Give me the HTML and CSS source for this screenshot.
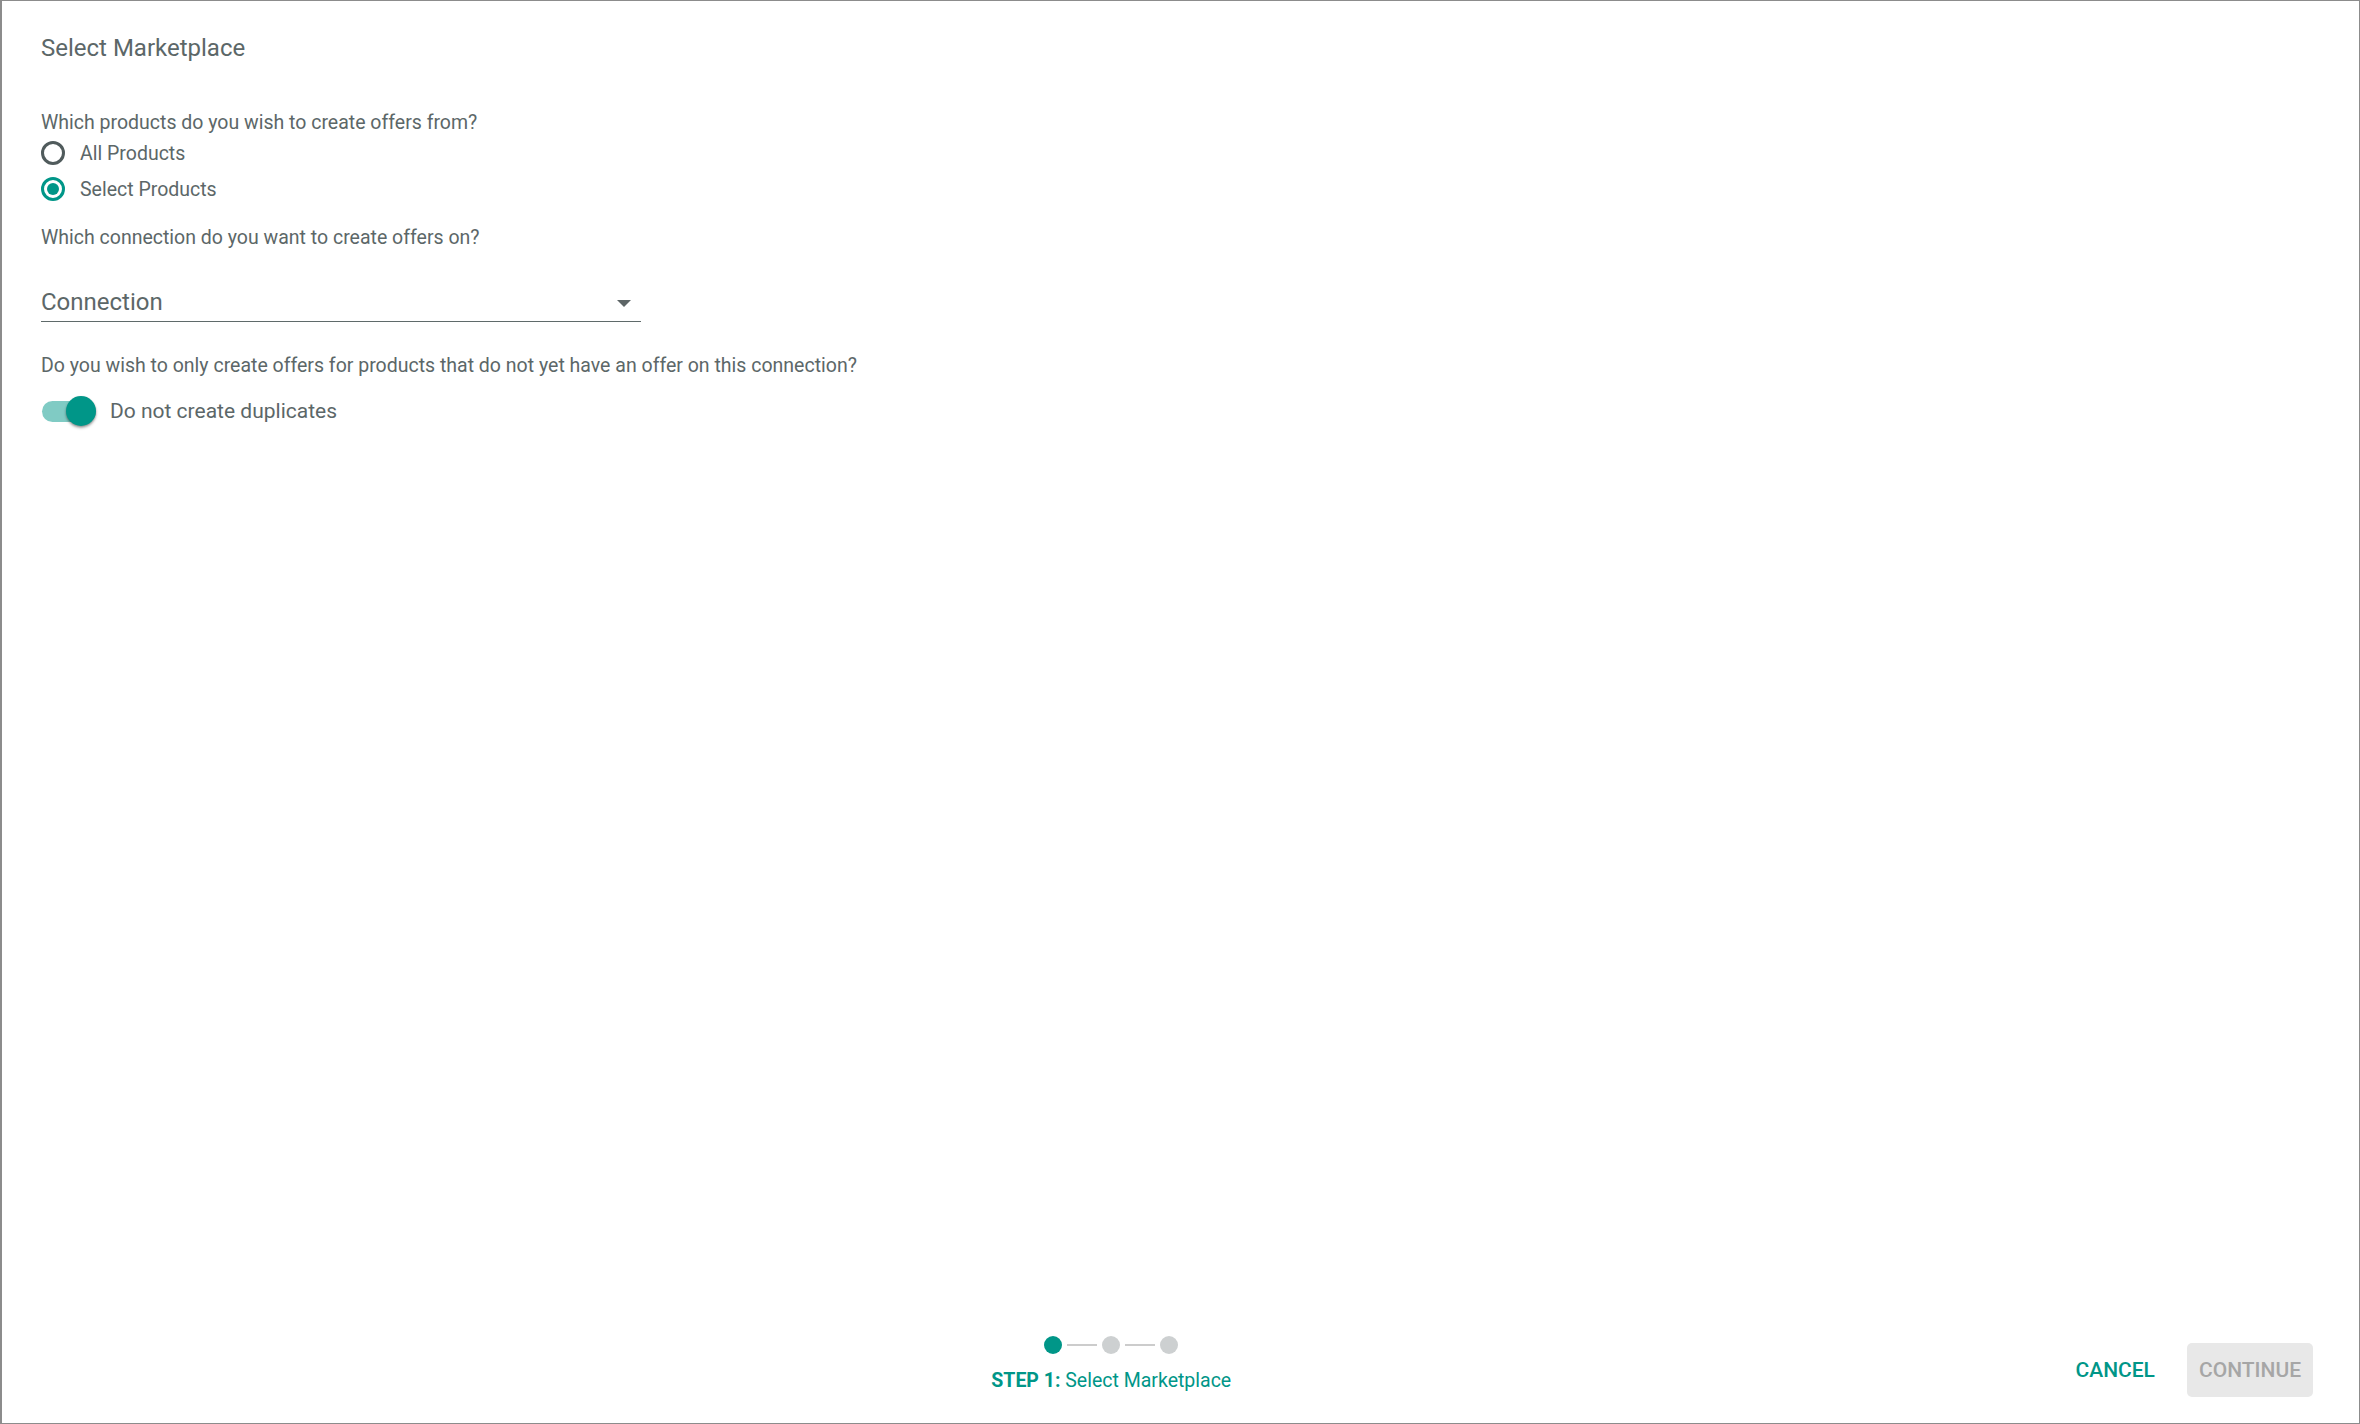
FILE: index.html
```html
<!DOCTYPE html>
<html lang="en">
<head>
<meta charset="utf-8">
<title>Select Marketplace</title>
<link rel="stylesheet" href="styles.css">
</head>
<body>
<div class="dialog">
  <main class="content">
    <h1 class="title">Select Marketplace</h1>
    <p class="question q-products">Which products do you wish to create offers from?</p>
    <div class="radio-group">
      <label class="radio"><span class="radio-circle"></span><span class="radio-label">All Products</span></label>
      <label class="radio checked"><span class="radio-circle"></span><span class="radio-label">Select Products</span></label>
    </div>
    <p class="question q-connection">Which connection do you want to create offers on?</p>
    <div class="select">
      <span class="select-value">Connection</span>
      <span class="select-arrow"></span>
    </div>
    <p class="question q-duplicates">Do you wish to only create offers for products that do not yet have an offer on this connection?</p>
    <div class="toggle-row">
      <span class="toggle"><span class="toggle-track"></span><span class="toggle-thumb"></span></span>
      <span class="toggle-label">Do not create duplicates</span>
    </div>
  </main>
  <footer class="footer">
    <div class="stepper">
      <div class="steps">
        <span class="dot active"></span><span class="line"></span><span class="dot"></span><span class="line"></span><span class="dot"></span>
      </div>
      <div class="step-label"><strong>STEP 1:</strong> Select Marketplace</div>
    </div>
    <div class="actions">
      <button class="btn btn-text" type="button">CANCEL</button>
      <button class="btn btn-disabled" type="button" disabled>CONTINUE</button>
    </div>
  </footer>
</div>
</body>
</html>
```

FILE: styles.css
```css
* { box-sizing: border-box; }
html, body { margin: 0; padding: 0; }
body {
  font-family: Roboto, "Noto Sans", "Liberation Sans", sans-serif;
  color: #5c6768;
  background: #fff;
}
.dialog {
  height: 1424px;
  border: 1px solid #8c8c8c;
  border-left-width: 2px;
  display: flex;
  flex-direction: column;
}
.content {
  flex: 1;
  padding: 31px 0 0 39px;
}
.title {
  margin: 0;
  font-size: 24px;
  line-height: 32px;
  font-weight: 400;
}
.question {
  margin: 0;
  font-size: 19.5px;
  line-height: 24px;
}
.q-products { margin-top: 47px; }
.q-connection { margin-top: 19px; }
.q-duplicates { margin-top: 32px; }

.radio-group { display: flex; flex-direction: column; }
.radio {
  display: flex;
  align-items: center;
  height: 36px;
  font-size: 19.5px;
}
.radio-circle {
  width: 24px;
  height: 24px;
  border: 3px solid #505b5c;
  border-radius: 50%;
  display: flex;
  align-items: center;
  justify-content: center;
  margin-right: 15px;
}
.radio.checked .radio-circle { border-color: #009688; }
.radio.checked .radio-circle::after {
  content: "";
  width: 12px;
  height: 12px;
  border-radius: 50%;
  background: #009688;
}

.select {
  margin-top: 36px;
  width: 600px;
  display: flex;
  align-items: center;
  justify-content: space-between;
  padding: 0 10px 3px 0;
  border-bottom: 1.5px solid #5f6a6a;
}
.select-value {
  font-size: 24px;
  line-height: 32px;
}
.select-arrow {
  width: 0;
  height: 0;
  border-left: 7.5px solid transparent;
  border-right: 7.5px solid transparent;
  border-top: 7.5px solid #5d6566;
  margin-top: 2px;
}

.toggle-row {
  margin-top: 15px;
  height: 36px;
  display: flex;
  align-items: center;
}
.toggle {
  display: flex;
  align-items: center;
  margin-left: 1px;
}
.toggle-track {
  width: 54px;
  height: 21px;
  border-radius: 10.5px;
  background: #80cbc4;
}
.toggle-thumb {
  width: 30px;
  height: 30px;
  border-radius: 50%;
  background: #009688;
  margin-left: -30px;
  box-shadow: 0 2px 3px rgba(0,0,0,0.3), 0 1px 2px rgba(0,0,0,0.2);
}
.toggle-label {
  margin-left: 14px;
  font-size: 21px;
  line-height: 36px;
}

.footer {
  display: flex;
  align-items: flex-end;
  padding: 0 46px 26px 39px;
}
.stepper {
  flex: 1;
  display: flex;
  flex-direction: column;
  align-items: center;
  padding-left: 118px;
  margin-bottom: 4px;
}
.steps {
  display: flex;
  align-items: center;
  gap: 5px;
}
.dot {
  width: 18px;
  height: 18px;
  border-radius: 50%;
  background: #cdd0d1;
}
.dot.active { background: #009688; }
.line {
  width: 30px;
  height: 2px;
  background: #cccccc;
}
.step-label {
  margin-top: 15px;
  font-size: 19.5px;
  line-height: 24px;
  color: #009688;
}
.step-label strong { font-weight: 700; }

.actions {
  display: flex;
  align-items: center;
  gap: 20px;
}
.btn {
  height: 54px;
  padding: 0 12px;
  border: none;
  font-family: Roboto, "Noto Sans", "Liberation Sans", sans-serif;
  font-size: 21px;
  font-weight: 500;
  border-radius: 5px;
  background: transparent;
}
.btn-text { color: #009688; }
.btn-disabled {
  background: #e8e8e8;
  color: #a6a6a6;
}
```
